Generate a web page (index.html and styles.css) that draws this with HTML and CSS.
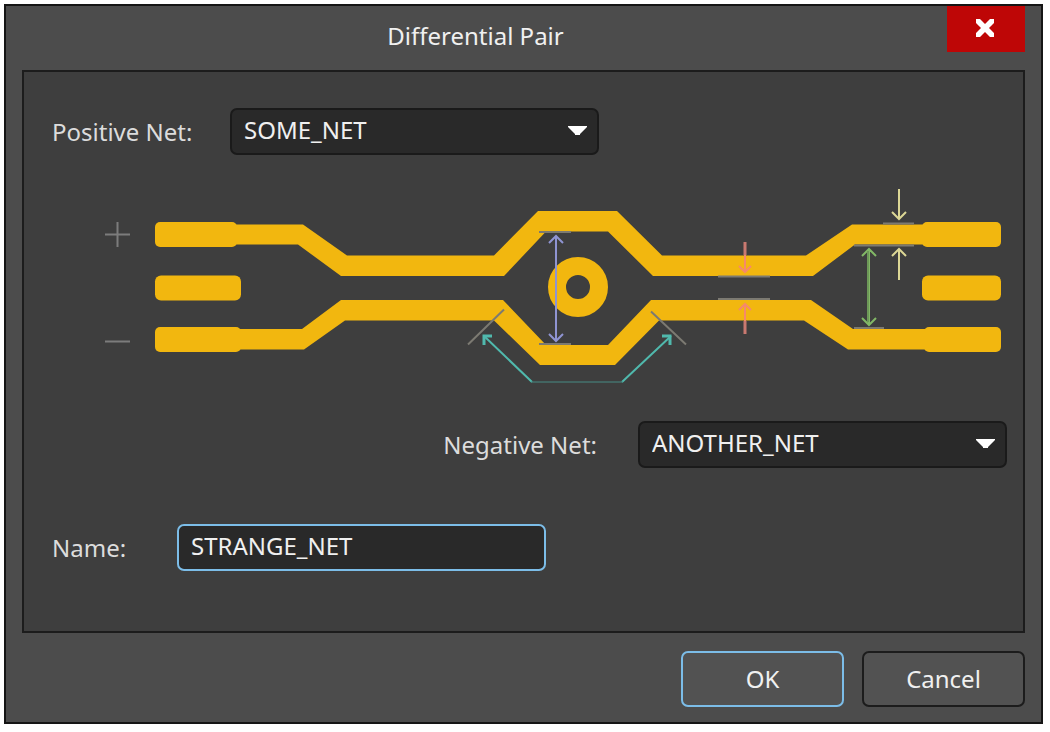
FILE: index.html
```html
<!DOCTYPE html>
<html lang="en">
<head>
    <meta charset="UTF-8">
    <meta name="viewport" content="width=device-width, initial-scale=1.0">
    <title>Differential Pair</title>
    <link rel="stylesheet" href="styles.css">
</head>
<body>
    <form class="dialog">
        <header class="titlebar">
            <h1>Differential Pair</h1>
            <button type="button" class="close" aria-label="Close">
                <svg width="18" height="18" viewBox="0 0 18 18">
                    <path d="M0 0H4L6 2L9 5L12 2L14 0H18V4L15 7L13 9L15 11L18 14V18H14L11 15L9 13L7 15L4 18H0V14L3 11L5 9L3 7L0 4Z" fill="#fff"/>
                </svg>
            </button>
        </header>

        <main class="panel">
            <div class="row positive">
                <label for="positiveNet">Positive Net:</label>
                <div class="select">
                    <select id="positiveNet">
                        <option>SOME_NET</option>
                    </select>
                    <svg class="caret" width="19" height="10" viewBox="0 0 19 10"><path d="M0 0H19V1L12 8V9H7V8L0 1Z" fill="#fff"/></svg>
                </div>
            </div>

            <svg class="diagram" viewBox="24 185 999 200" fill="none">
                <!-- polarity signs -->
                <path d="M105 234.500H130M117.500 222V247M105 341.500H130" stroke="#7c7c7c" stroke-width="2"/>

                <!-- pads -->
                <g fill="#f2b70f">
                    <rect x="155" y="222" width="82" height="25" rx="5"/>
                    <rect x="155" y="275.500" width="86" height="25" rx="6"/>
                    <rect x="155" y="327" width="86" height="25" rx="5"/>
                    <rect x="922" y="222" width="79" height="25" rx="5"/>
                    <rect x="922" y="275.500" width="79" height="25" rx="6"/>
                    <rect x="924" y="327" width="77" height="25" rx="5"/>
                </g>

                <!-- tracks -->
                <g fill="#f2b70f">
                    <path d="M230 224.500H303L347 255.500H494L538 211H617L662 255.500H806L852 224.500H930V244.500H855L813 276H653L608 231.500H546L504 276H341L298 244.500H230Z"/>
                    <path d="M232 329H302L341 300H503L546 345H608L651 300H811L853 329H930V349.500H848L804 320.500H659L615 365H540L494 320.500H345L304 349.500H232Z"/>
                </g>
                <circle cx="578" cy="287" r="21" stroke="#f2b70f" stroke-width="18"/>

                <!-- extension lines -->
                <g stroke="#7c7a72" stroke-width="2">
                    <path d="M539 232H571M539 344H571"/>
                    <path d="M504 309.500L468 344.500M651 311.500L686 344.500"/>
                    <path d="M718 276.500H770M718 299H770"/>
                    <path d="M883 223.500H914M854 245.500H914M854 328H884"/>
                </g>

                <!-- via clearance -->
                <path d="M556 236V341M549 243L556 236L563 243M549 334L556 341L563 334" stroke="#8f94d2" stroke-width="2"/>

                <!-- uncoupled length -->
                <path d="M484 336L532 382M622 382L671 336" stroke="#50b9ad" stroke-width="2"/>
                <path d="M484 345V336H492M662 336H670V345" stroke="#50b9ad" stroke-width="3"/>
                <path d="M531 382H623" stroke="#478b84" stroke-width="1"/>

                <!-- pair gap -->
                <g stroke="#f5896b" stroke-width="2">
                    <path d="M745 255V272M739 266L745 272L751 266"/>
                    <path d="M745 321V304M739 310L745 304L751 310"/>
                </g>
                <path d="M745 242V255M745 321V334" stroke="#c97970" stroke-width="3"/>

                <!-- pad pitch -->
                <path d="M869 249V325M862 256L869 249L876 256M862 318L869 325L876 318" stroke="#82b866" stroke-width="2"/>
                <path d="M868 251V322" stroke="#6d9858" stroke-width="2"/>

                <!-- track width -->
                <path d="M899 189V219M892 212L899 219L906 212M899 280V249M892 256L899 249L906 256" stroke="#dcd795" stroke-width="2"/>
            </svg>

            <div class="row negative">
                <label for="negativeNet">Negative Net:</label>
                <div class="select">
                    <select id="negativeNet">
                        <option>ANOTHER_NET</option>
                    </select>
                    <svg class="caret" width="19" height="10" viewBox="0 0 19 10"><path d="M0 0H19V1L12 8V9H7V8L0 1Z" fill="#fff"/></svg>
                </div>
            </div>

            <div class="row name">
                <label for="pairName">Name:</label>
                <input type="text" id="pairName" value="STRANGE_NET">
            </div>
        </main>

        <footer class="actions">
            <button type="submit" class="btn ok">OK</button>
            <button type="button" class="btn">Cancel</button>
        </footer>
    </form>
</body>
</html>
```

FILE: styles.css
```css
* {
    box-sizing: border-box;
}
body {
    margin: 0;
    padding: 4px 7px 8px 4px;
    background: #fff;
    font-family: "Noto Sans", "Open Sans", sans-serif;
    font-size: 24px;
    line-height: 32px;
    color: #dcdcdc;
}
button, input, select {
    font: inherit;
    color: #f0f0f0;
}
.dialog {
    background: #4c4c4c;
    border: 2px solid #151515;
    padding: 0 16px 15px;
}
.titlebar {
    display: grid;
    grid-template-columns: 78px 1fr 78px;
    height: 64px;
}
.titlebar h1 {
    grid-column: 2;
    margin: 0;
    padding: 14px 96px 0 0;
    font-size: 24px;
    font-weight: normal;
    text-align: center;
    color: #f0f0f0;
}
.close {
    display: flex;
    align-items: center;
    justify-content: center;
    height: 46px;
    padding: 0 2px 2px 0;
    border: none;
    background: #be0606;
}
.panel {
    background: #3e3e3e;
    border: 2px solid #1c1c1c;
    padding: 36px 0 60px;
}
.row {
    display: flex;
    align-items: center;
    padding: 0 16px 0 28px;
}
.positive label {
    width: 178px;
}
.negative {
    justify-content: flex-end;
    gap: 41px;
    margin: 36px 0 56px;
}
.name label {
    width: 125px;
}
.select {
    position: relative;
    width: 369px;
}
.select select, .name input {
    display: block;
    width: 369px;
    height: 47px;
    padding: 0 12px 4px;
    background: #292929;
    border: 2px solid #1a1a1a;
    border-radius: 7px;
    outline: none;
}
.select select {
    appearance: none;
}
.name input {
    border-color: #7cbde8;
}
.caret {
    position: absolute;
    right: 12px;
    top: 18px;
    pointer-events: none;
}
.diagram {
    display: block;
    width: 100%;
    margin-top: 30px;
}
.actions {
    display: flex;
    justify-content: flex-end;
    gap: 18px;
    padding-top: 18px;
}
.btn {
    width: 163px;
    height: 56px;
    background: #525252;
    border: 2px solid #1c1c1c;
    border-radius: 7px;
}
.ok {
    border-color: #7cbde8;
}
```
